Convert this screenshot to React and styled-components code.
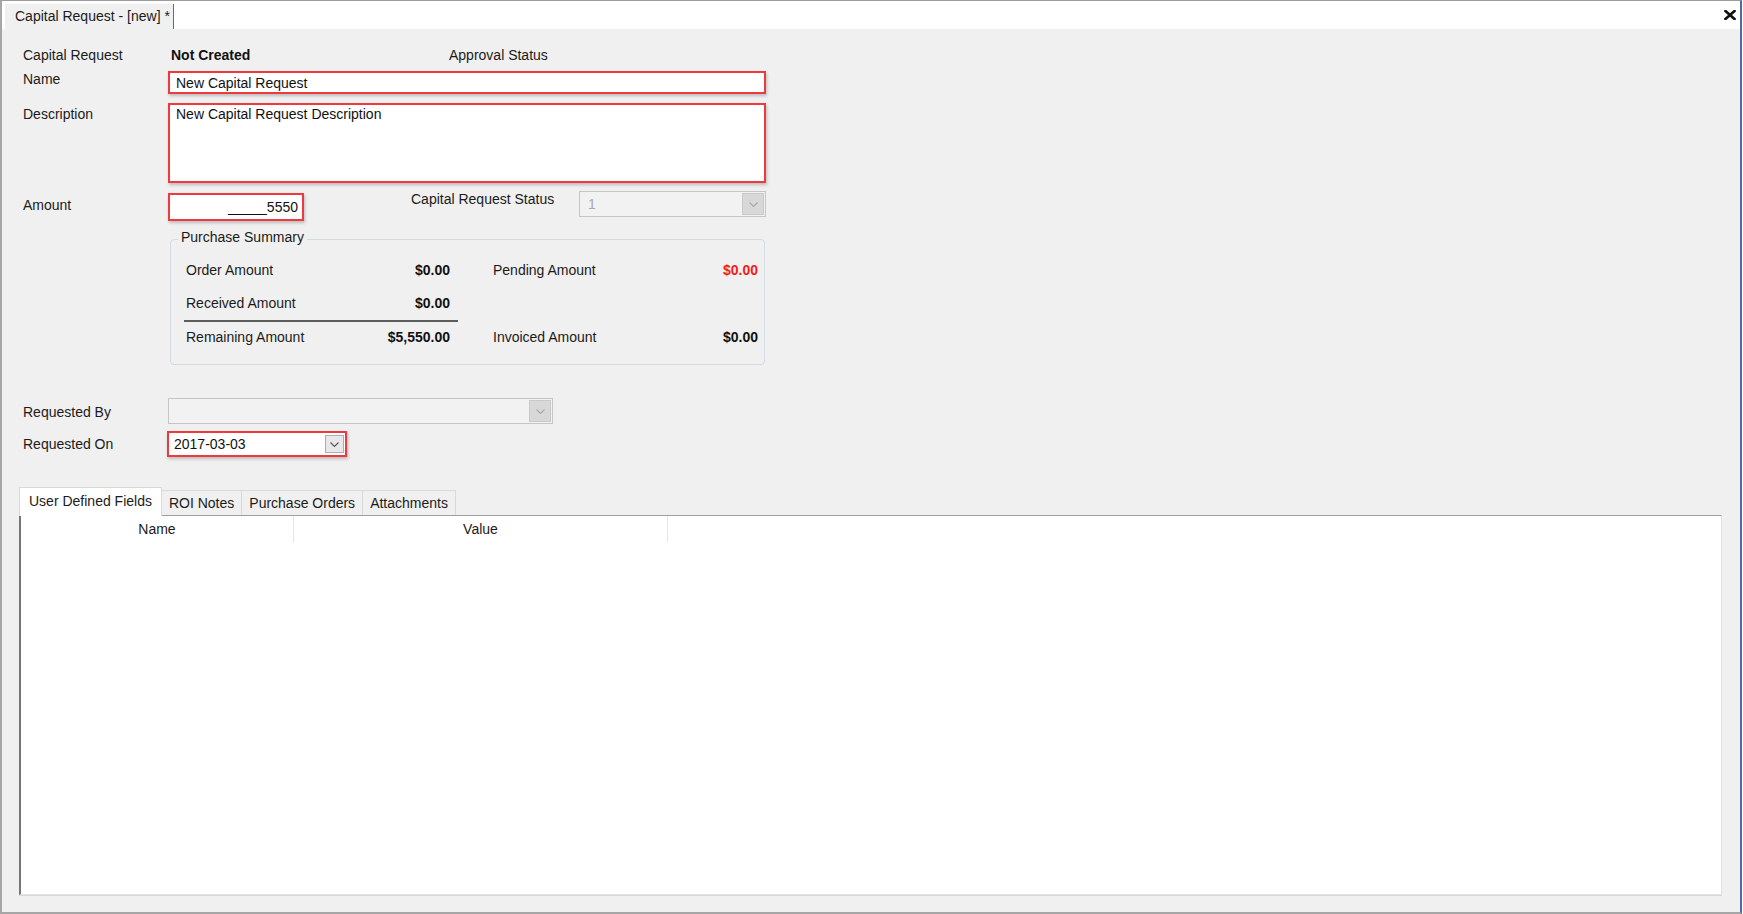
import React from "react";
import styled, { createGlobalStyle, css } from "styled-components";

const Global = createGlobalStyle`
  html, body { margin: 0; padding: 0; background: #ffffff; }
  body {
    font-family: "Liberation Sans", Arial, sans-serif;
    font-size: 14px;
    color: #1b1b1b;
  }
  * { box-sizing: border-box; }
`;

const Window = styled.div`
  width: 1742px;
  height: 914px;
  display: flex;
  flex-direction: column;
  background: #f0f0f0;
  border-top: 1px solid #9c9c9c;
  border-left: 2px solid #a6a6a6;
  border-bottom: 2px solid #a6a6a6;
  border-right: 2px solid #4d6d9c;
`;

const TabStrip = styled.div`
  height: 28px;
  flex: none;
  background: #ffffff;
  display: flex;
  align-items: flex-end;
  justify-content: space-between;
  padding-left: 3px;
`;

const DocTab = styled.div`
  height: 25px;
  line-height: 25px;
  padding: 0 3px 0 10px;
  background: #f0f0f0;
  border-right: 1px solid #6b6b6b;
  color: #1b1b1b;
  white-space: nowrap;
`;

const CloseButton = styled.div`
  align-self: flex-start;
  margin-top: 9px;
  margin-right: 4px;
  width: 12px;
  height: 10px;
  display: flex;
`;

const Content = styled.div`
  flex: 1;
  display: flex;
  flex-direction: column;
  padding: 17px 18px 17px 17px;
  min-height: 0;
`;

const Form = styled.div`
  display: flex;
  flex-direction: column;
  padding-left: 4px;
`;

const Row = styled.div`
  display: flex;
  align-items: flex-start;
  margin-top: ${(p) => p.$mt || 0}px;
`;

const Label = styled.div`
  width: 145px;
  flex: none;
  line-height: 16px;
  padding-top: ${(p) => p.$pt || 0}px;
  white-space: nowrap;
`;

const StatusValue = styled.div`
  width: 281px;
  padding-left: 3px;
  line-height: 16px;
  font-weight: bold;
  color: #111;
`;

const PlainText = styled.div`
  line-height: 16px;
  white-space: nowrap;
`;

const requiredBox = css`
  border: 2px solid #ee3a3f;
  background: #ffffff;
  box-shadow: 1px 2px 3px rgba(0, 0, 0, 0.22);
`;

const TextBox = styled.div`
  ${requiredBox};
  width: ${(p) => p.$w}px;
  height: ${(p) => p.$h}px;
  margin-top: ${(p) => p.$mt || 0}px;
  padding: ${(p) => (p.$multi ? "1px 6px" : "0 6px")};
  display: flex;
  align-items: ${(p) => (p.$multi ? "flex-start" : "center")};
  justify-content: ${(p) => (p.$right ? "flex-end" : "flex-start")};
  padding-right: ${(p) => (p.$right ? "4px" : "6px")};
  line-height: 16px;
  color: #111;
  white-space: nowrap;
  flex: none;
`;

const StatusLabel = styled.div`
  width: 169px;
  margin-left: 107px;
  line-height: 16px;
  white-space: nowrap;
  flex: none;
`;

const Combo = styled.div`
  width: ${(p) => p.$w}px;
  height: 26px;
  margin-left: ${(p) => p.$ml || 0}px;
  display: flex;
  align-items: center;
  justify-content: space-between;
  flex: none;
  ${(p) =>
    p.$required
      ? requiredBox
      : css`
          border: 1px solid #c6c6c6;
          background: #f2f2f2;
        `}
`;

const ComboText = styled.span`
  padding-left: ${(p) => (p.$required ? 5 : 8)}px;
  line-height: 16px;
  color: ${(p) => (p.$disabled ? "#a9a9a9" : "#111")};
`;

const ComboButton = styled.div`
  width: ${(p) => (p.$required ? 19 : 22)}px;
  height: ${(p) => (p.$required ? 18 : 22)}px;
  margin-right: 1px;
  display: flex;
  align-items: center;
  justify-content: center;
  background: ${(p) => (p.$required ? "#e8e8e8" : "#d8d8d8")};
  border: 1px solid ${(p) => (p.$required ? "#adadad" : "#c9c9c9")};
  color: ${(p) => (p.$required ? "#555" : "#a8a8a8")};
`;

const Group = styled.fieldset`
  margin: 8px 0 0 2px;
  width: 595px;
  padding: 13px 0 19px 15px;
  border: 1px solid #d3dce3;
  border-radius: 4px;
  min-width: 0;
`;

const Legend = styled.legend`
  margin-left: -8px;
  padding: 0 3px 4px 3px;
  line-height: 16px;
  color: #1b1b1b;
`;

const SummaryGrid = styled.div`
  display: grid;
  grid-template-columns: 264px 265px;
  grid-template-rows: 33px 25px 2px 23px;
  column-gap: 43px;
`;

const SummaryCell = styled.div`
  display: flex;
  justify-content: space-between;
  align-items: flex-start;
  line-height: 16px;
  grid-column: ${(p) => p.$col};
  grid-row: ${(p) => p.$row};
  padding-top: ${(p) => p.$pt || 0}px;
`;

const Amount = styled.span`
  font-weight: bold;
  color: ${(p) => (p.$alert ? "#f01c1c" : "#111")};
`;

const Separator = styled.div`
  grid-column: 1;
  grid-row: 3;
  height: 2px;
  margin: 0 -8px 0 -2px;
  background: #5c5c5c;
`;

const TabBar = styled.div`
  display: flex;
  align-items: flex-end;
  margin-top: 30px;
  height: 28px;
  flex: none;
  position: relative;
  z-index: 1;
`;

const Tab = styled.div`
  height: ${(p) => (p.$active ? 29 : 25)}px;
  line-height: ${(p) => (p.$active ? 26 : 25)}px;
  padding: 0 ${(p) => (p.$active ? 9 : 7)}px;
  margin-bottom: ${(p) => (p.$active ? -1 : 0)}px;
  background: ${(p) => (p.$active ? "#ffffff" : "#f0f0f0")};
  border: 1px solid #d9d9d9;
  border-bottom: none;
  border-left: ${(p) => (p.$first ? "1px solid #d9d9d9" : "none")};
  white-space: nowrap;
  color: #1b1b1b;
`;

const GridPanel = styled.div`
  flex: 1;
  background: #ffffff;
  border-top: 1px solid #a0a0a0;
  border-left: 2px solid #767676;
  border-right: 1px solid #e2e2e2;
  border-bottom: 1px solid #e2e2e2;
  box-shadow: 0 1px 0 #d8d8d8;
`;

const HeaderRow = styled.div`
  display: flex;
  height: 26px;
  background: #ffffff;
`;

const HeaderCell = styled.div`
  width: ${(p) => p.$w}px;
  line-height: 27px;
  text-align: center;
  border-right: 1px solid #e6e6e6;
  color: #1b1b1b;
`;

const Chevron = () => (
  <svg width="9" height="5" viewBox="0 0 9 5" fill="none">
    <polyline points="0.5,0.5 4.5,4.5 8.5,0.5" stroke="currentColor" strokeWidth="1.1" />
  </svg>
);

const CloseIcon = () => (
  <svg width="12" height="10" viewBox="0 0 12 10">
    <path d="M1.5 1 L10.5 9 M10.5 1 L1.5 9" stroke="#111" strokeWidth="2.6" strokeLinecap="square" />
  </svg>
);

export default function App() {
  return (
    <>
      <Global />
      <Window>
        <TabStrip>
          <DocTab>Capital Request - [new] *</DocTab>
          <CloseButton>
            <CloseIcon />
          </CloseButton>
        </TabStrip>
        <Content>
          <Form>
            <Row $mt={1}>
              <Label>Capital Request</Label>
              <StatusValue>Not Created</StatusValue>
              <PlainText>Approval Status</PlainText>
            </Row>
            <Row $mt={8}>
              <Label>Name</Label>
              <TextBox $w={598} $h={23}>New Capital Request</TextBox>
            </Row>
            <Row $mt={9}>
              <Label $pt={3}>Description</Label>
              <TextBox $w={598} $h={80} $multi>
                New Capital Request Description
              </TextBox>
            </Row>
            <Row $mt={8}>
              <Label $pt={6}>Amount</Label>
              <TextBox $w={136} $h={28} $mt={2} $right>
                _____5550
              </TextBox>
              <StatusLabel>Capital Request Status</StatusLabel>
              <Combo $w={187} $ml={-1}>
                <ComboText $disabled>1</ComboText>
                <ComboButton>
                  <Chevron />
                </ComboButton>
              </Combo>
            </Row>
            <Row>
              <Label />
              <Group>
                <Legend>Purchase Summary</Legend>
                <SummaryGrid>
                  <SummaryCell $col={1} $row={1}>
                    <span>Order Amount</span>
                    <Amount>$0.00</Amount>
                  </SummaryCell>
                  <SummaryCell $col={2} $row={1}>
                    <span>Pending Amount</span>
                    <Amount $alert>$0.00</Amount>
                  </SummaryCell>
                  <SummaryCell $col={1} $row={2}>
                    <span>Received Amount</span>
                    <Amount>$0.00</Amount>
                  </SummaryCell>
                  <Separator />
                  <SummaryCell $col={1} $row={4} $pt={7}>
                    <span>Remaining Amount</span>
                    <Amount>$5,550.00</Amount>
                  </SummaryCell>
                  <SummaryCell $col={2} $row={4} $pt={7}>
                    <span>Invoiced Amount</span>
                    <Amount>$0.00</Amount>
                  </SummaryCell>
                </SummaryGrid>
              </Group>
            </Row>
            <Row $mt={33}>
              <Label $pt={6}>Requested By</Label>
              <Combo $w={385}>
                <ComboText />
                <ComboButton>
                  <Chevron />
                </ComboButton>
              </Combo>
            </Row>
            <Row $mt={7}>
              <Label $pt={5}>Requested On</Label>
              <Combo $w={180} $ml={-1} $required>
                <ComboText $required>2017-03-03</ComboText>
                <ComboButton $required>
                  <Chevron />
                </ComboButton>
              </Combo>
            </Row>
          </Form>
          <TabBar>
            <Tab $active $first>User Defined Fields</Tab>
            <Tab>ROI Notes</Tab>
            <Tab>Purchase Orders</Tab>
            <Tab>Attachments</Tab>
          </TabBar>
          <GridPanel>
            <HeaderRow>
              <HeaderCell $w={273}>Name</HeaderCell>
              <HeaderCell $w={374}>Value</HeaderCell>
            </HeaderRow>
          </GridPanel>
        </Content>
      </Window>
    </>
  );
}
